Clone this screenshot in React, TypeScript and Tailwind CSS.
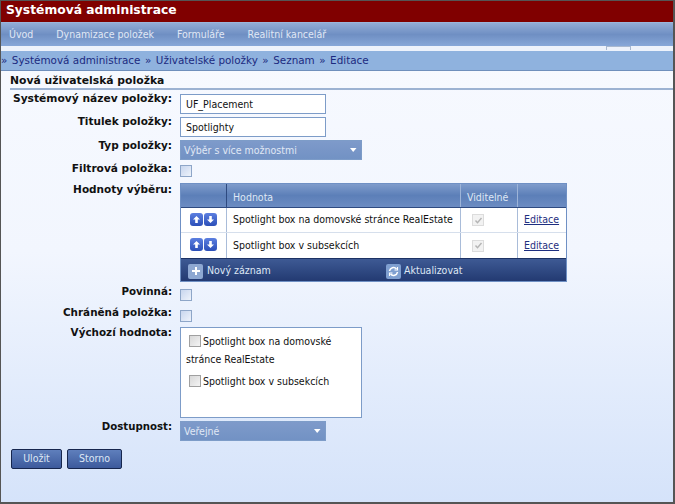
import type { ReactNode } from "react";

const TAHOMA = "font-['DejaVu_Sans_Condensed','DejaVu_Sans',sans-serif] [font-stretch:condensed]";
const VERDANA = "font-['DejaVu_Sans',sans-serif]";

const NAV = ["Úvod", "Dynamizace položek", "Formuláře", "Realitní kancelář"];
const ROWS = ["Spotlight box na domovské stránce RealEstate", "Spotlight box v subsekcích"];

function Row({ label, className, labelClass = "", children }: { label: string; className: string; labelClass?: string; children: ReactNode }) {
  return (
    <div className={`flex ${className}`}>
      <div className={`w-[171px] shrink-0 text-right whitespace-nowrap leading-[13px] font-bold text-[#111] ${labelClass} ${VERDANA}`}>{label}</div>
      <div className="ml-[8px]">{children}</div>
    </div>
  );
}

function Check() {
  return <div className="w-[12px] h-[12px] border border-[#8ea6c8] bg-gradient-to-br from-[#c8d6ee] to-[#eef3fb]" />;
}

function GrayCheck() {
  return <span className="inline-block w-[12px] h-[12px] border border-[#a0a0a0] bg-gradient-to-br from-[#d8d8d8] to-[#f4f4f4]" />;
}

function Select({ value, width }: { value: string; width: string }) {
  return (
    <div className={`${width} h-[20px] flex items-center justify-between pl-[3px] pr-[2px] border border-[#7d9cc8] bg-gradient-to-b from-[#7e9aca] to-[#7292c4] text-[10.5px] text-[#e0e8f5] ${TAHOMA}`}>
      <span className="pt-[1px]">{value}</span>
      <svg width="12" height="8" viewBox="0 0 12 8"><path d="M3 2h6.5L6.2 6z" fill="#fff" /></svg>
    </div>
  );
}

function Arrow({ up }: { up?: boolean }) {
  return (
    <span className="w-[13px] h-[13px] rounded-[3px] bg-gradient-to-b from-[#5c7fe0] to-[#2c4fb8] flex items-center justify-center">
      <svg width="9" height="9" viewBox="0 0 9 9" className={up ? "" : "rotate-180"}>
        <path d="M4.5 1L8 4.6H5.8V8H3.2V4.6H1z" fill="#fff" />
      </svg>
    </span>
  );
}

function ValueTable() {
  return (
    <div className={`w-[387px] border border-[#6f90c4] text-[10.5px] ${TAHOMA}`}>
      <div className="flex h-[24px] bg-gradient-to-b from-[#7f9ccb] via-[#5c7fb8] to-[#6c8cc2] text-[#dfe8f5] border-b border-[#2e4a80]">
        <div className="w-[46px] border-r border-[#2e4a80]" />
        <div className="w-[234px] pl-[6px] pt-[4px] flex items-center border-r border-[#9db4d8]">Hodnota</div>
        <div className="w-[57px] pl-[6px] pt-[4px] flex items-center border-r border-[#9db4d8]">Viditelné</div>
        <div className="flex-1" />
      </div>
      {ROWS.map((row, i) => (
        <div key={row} className={`flex h-[25px] bg-white text-[#111] ${i === 0 ? "border-b border-[#d6dfec]" : ""}`}>
          <div className="w-[46px] pb-[2px] flex items-center justify-center gap-[1px] border-r border-[#a9bcd9]">
            <Arrow up />
            <Arrow />
          </div>
          <div className="w-[234px] pl-[6px] flex items-center border-r border-[#a9bcd9] whitespace-nowrap">{row}</div>
          <div className="w-[57px] pl-[11px] flex items-center border-r border-[#a9bcd9]">
            <span className="w-[12px] h-[12px] border border-[#dcdcdc] bg-[#f2f2f2] flex items-center justify-center">
              <svg width="9" height="9" viewBox="0 0 9 9"><path d="M1.5 4.5l2 2.2L7.5 2" fill="none" stroke="#b4b4b4" strokeWidth="1.4" /></svg>
            </span>
          </div>
          <div className="flex-1 pl-[6px] flex items-center text-[#1f2f80] underline">Editace</div>
        </div>
      ))}
      <div className="flex items-center h-[23px] pt-[2px] border-t border-[#1d3264] bg-gradient-to-b from-[#3e5a94] to-[#233a72] text-[#dfe8f5]">
        <div className="ml-[7px] w-[15px] h-[15px] rounded-[2px] bg-[#8ea8d2] flex items-center justify-center text-white">
          <svg width="10" height="10" viewBox="0 0 10 10"><path d="M5 1v8M1 5h8" stroke="#fff" strokeWidth="2" /></svg>
        </div>
        <span className="ml-[4px] w-[64px] whitespace-nowrap">Nový záznam</span>
        <div className="ml-[115px] w-[15px] h-[15px] rounded-[2px] bg-[#7f9fd0] flex items-center justify-center">
          <svg width="11" height="11" viewBox="0 0 11 11" fill="none" stroke="#fff" strokeWidth="1.6">
            <path d="M1.5 5A4 4 0 0 1 8.5 3M9.5 6A4 4 0 0 1 2.5 8" />
            <path d="M9.5 1v3h-3M1.5 10V7h3" strokeWidth="1.1" />
          </svg>
        </div>
        <span className="ml-[3px]">Aktualizovat</span>
      </div>
    </div>
  );
}

function Button({ children, width }: { children: ReactNode; width: string }) {
  return (
    <button className={`${width} h-[20px] rounded-[2px] border border-[#16264e] bg-gradient-to-b from-[#5f7fbc] to-[#3d5a9c] text-[10.5px] text-[#dfe8f5] ${TAHOMA}`}>
      {children}
    </button>
  );
}

export default function App() {
  return (
    <div className="w-[675px] h-[504px] overflow-hidden flex flex-col border border-[#555] border-b-2 border-r-2 bg-gradient-to-b from-[#f8faff] via-[#f2f6fe] to-[#d5e3fa]">
      <div className={`h-[21px] shrink-0 bg-[#800000] text-white text-[12.3px] font-bold pl-[5px] leading-[19px] ${VERDANA}`}>Systémová administrace</div>

      <div className={`h-[24px] shrink-0 flex items-center gap-[23px] pl-[8px] border-t border-[#9cb6dc] bg-gradient-to-b from-[#92acd6] via-[#6f8fc3] to-[#87a7d8] text-[10.5px] text-[#e0e8f5] ${TAHOMA}`}>
        {NAV.map(item => <span key={item}>{item}</span>)}
      </div>

      <div className="h-[5px] shrink-0 relative bg-[#edf2fb]">
        <div className="absolute left-[605px] top-0 w-[25px] h-[4px] border-x border-t border-[#a8b8d0]" />
      </div>

      <div className={`h-[20px] shrink-0 flex items-center gap-[4.5px] bg-[#8fb2de] border-b border-[#6f8fbc] text-[10.4px] text-[#1c2a80] ${VERDANA}`}>
        <span>»</span>
        <span>Systémová administrace</span>
        <span>»</span>
        <span>Uživatelské položky</span>
        <span>»</span>
        <span>Seznam</span>
        <span>»</span>
        <span>Editace</span>
      </div>

      <div className={`ml-[9px] h-[19px] pt-[4px] shrink-0 flex items-center border-b-2 border-[#9cb2d2] text-[10.8px] font-bold text-[#111] ${VERDANA}`}>Nová uživatelská položka</div>

      <div className="pt-[4px]">
        <Row label="Systémový název položky:" className="mb-[3px]" labelClass="-mt-[2px] text-[10.7px]">
          <div className={`w-[146px] h-[20px] border border-[#7d9cc8] bg-white pl-[5px] text-[10.5px] leading-[18px] text-[#111] ${TAHOMA}`}>UF_Placement</div>
        </Row>
        <Row label="Titulek položky:" className="mb-[3px]" labelClass="-mt-[2px] text-[10.5px]">
          <div className={`w-[146px] h-[20px] border border-[#7d9cc8] bg-white pl-[5px] text-[10.5px] leading-[18px] text-[#111] ${TAHOMA}`}>Spotlighty</div>
        </Row>
        <Row label="Typ položky:" className="mb-[5px]" labelClass="-mt-[1px] text-[10.5px]">
          <Select value="Výběr s více možnostmi" width="w-[182px]" />
        </Row>
        <Row label="Filtrová položka:" className="mb-[6px]" labelClass="-mt-[3px] text-[10.6px]">
          <Check />
        </Row>
        <Row label="Hodnoty výběru:" className="mb-[7px]" labelClass="text-[10.5px]">
          <ValueTable />
        </Row>
        <Row label="Povinná:" className="mb-[9px]" labelClass="-mt-[4px] text-[10.3px]">
          <Check />
        </Row>
        <Row label="Chráněná položka:" className="mb-[5px]" labelClass="-mt-[4px] text-[10.4px]">
          <Check />
        </Row>
        <Row label="Výchozí hodnota:" className="mb-[3px]" labelClass="-mt-[1px] text-[10.4px]">
          <div className={`w-[182px] h-[91px] border border-[#7d9cc8] bg-white pl-[5px] pt-[4px] text-[10.5px] leading-[18px] text-[#111] ${TAHOMA}`}>
            <div className="flex items-center pl-[3px]"><GrayCheck /><span className="ml-[2px]">Spotlight box na domovské</span></div>
            <div>stránce RealEstate</div>
            <div className="flex items-center pl-[3px] mt-[4px]"><GrayCheck /><span className="ml-[2px]">Spotlight box v subsekcích</span></div>
          </div>
        </Row>
        <Row label="Dostupnost:" className="" labelClass="-mt-[1px] text-[10.2px]">
          <Select value="Veřejné" width="w-[146px]" />
        </Row>
        <div className="flex gap-[5px] pl-[10px] pt-[8px]">
          <Button width="w-[51px]">Uložit</Button>
          <Button width="w-[55px]">Storno</Button>
        </div>
      </div>
    </div>
  );
}
